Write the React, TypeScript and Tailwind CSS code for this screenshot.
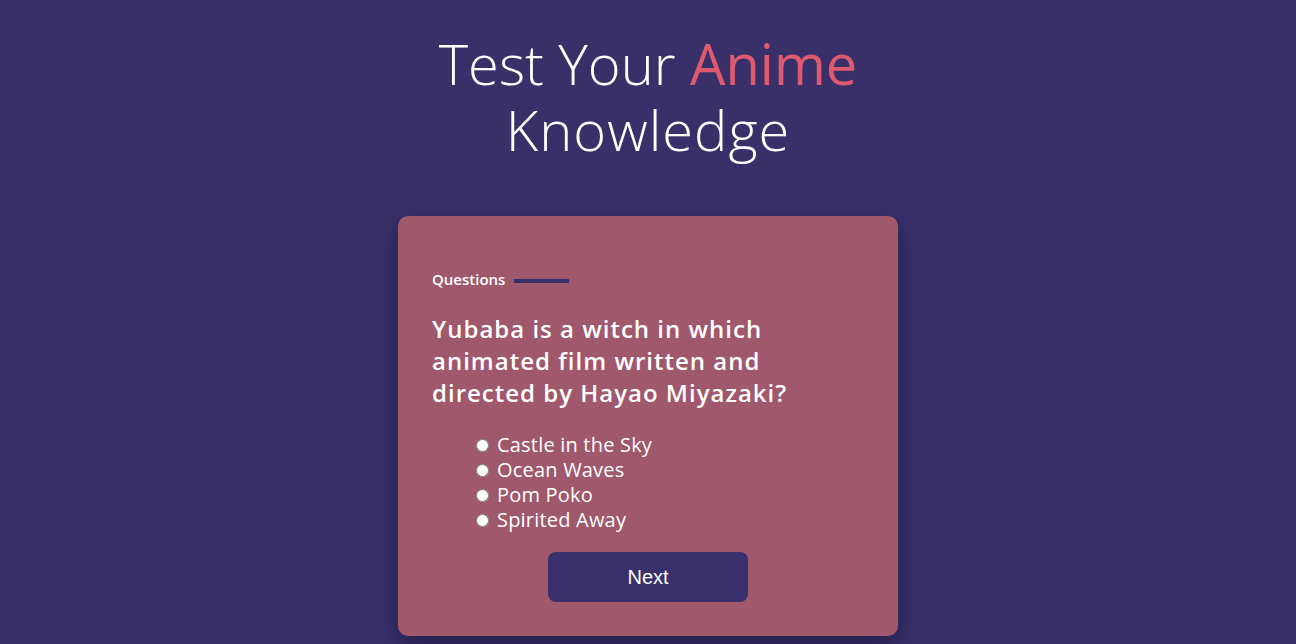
const options = ["Castle in the Sky", "Ocean Waves", "Pom Poko", "Spirited Away"]

export default function App() {
  return (
    <div className="min-h-[644px] bg-[#39306a] pt-[30px] text-white" style={{ fontFamily: "'Open Sans', Lato, sans-serif" }}>
      <h1 className="text-center text-[56px] leading-[66px] font-light">
        Test Your <span className="font-normal text-[#de5a6f]">Anime</span>
        <br />
        <span className="tracking-[1px]">Knowledge</span>
      </h1>

      <div className="mx-auto mt-[54px] w-[500px] rounded-[10px] bg-[#a0586d] px-[34px] pt-[52px] pb-[34px] shadow-[0_10px_30px_rgba(20,15,45,0.55)]">
        <div className="flex items-center gap-[9px]">
          <span className="text-[15px] font-semibold">Questions</span>
          <span className="mt-[3px] h-[4px] w-[55px] bg-[#39306a]" />
        </div>

        <h2 className="mt-[22px] w-[380px] text-[24px] leading-[32px] font-semibold tracking-[1px]">
          Yubaba is a witch in which animated film written and directed by Hayao Miyazaki?
        </h2>

        <ul className="mt-[24px] pl-[44px]">
          {options.map((o) => (
            <li key={o} className="flex h-[25px] items-center gap-[8px] text-[20px] font-normal tracking-[0.2px]">
              <input type="radio" name="answer" className="m-0 h-[13px] w-[13px]" />
              <label>{o}</label>
            </li>
          ))}
        </ul>

        <div className="mt-[19px] flex justify-center">
          <button
            className="h-[50px] w-[200px] rounded-[8px] bg-[#3a306b] text-[20px] text-white"
            style={{ fontFamily: "'Liberation Sans', Arial, sans-serif" }}
          >
            Next
          </button>
        </div>
      </div>
    </div>
  )
}
